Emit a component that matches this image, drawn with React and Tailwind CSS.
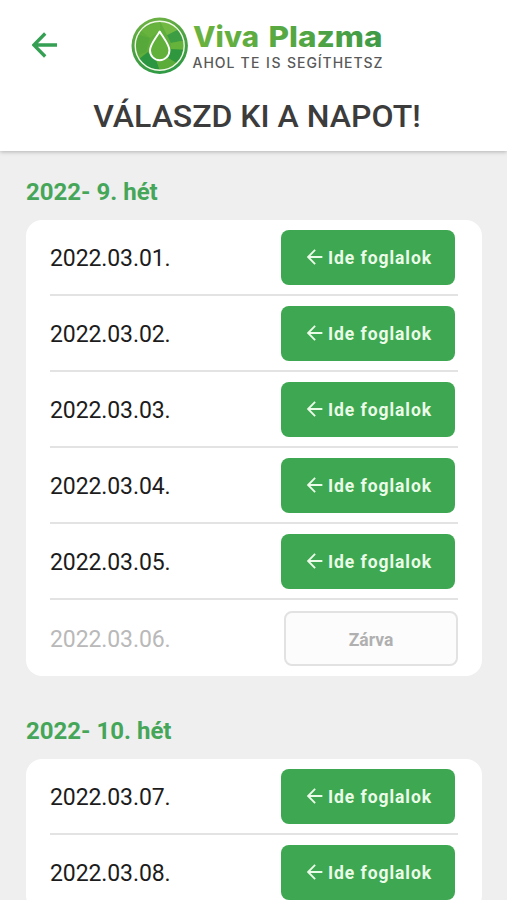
import { useState } from "react";

const WEEKS = [
  {
    title: "2022- 9. hét",
    days: [
      { date: "2022.03.01.", open: true },
      { date: "2022.03.02.", open: true },
      { date: "2022.03.03.", open: true },
      { date: "2022.03.04.", open: true },
      { date: "2022.03.05.", open: true },
      { date: "2022.03.06.", open: false },
    ],
  },
  {
    title: "2022- 10. hét",
    days: [
      { date: "2022.03.07.", open: true },
      { date: "2022.03.08.", open: true },
    ],
  },
];

function ArrowLeft({ className, strokeWidth }) {
  return (
    <svg viewBox="0 0 26 26" fill="none" stroke="currentColor" strokeWidth={strokeWidth} className={className}>
      <path d="M25 13H2.5M13.2 1.5 1.8 13l11.4 11.5" />
    </svg>
  );
}

function Logo() {
  return (
    <svg width="252" height="60" viewBox="0 0 252 60" className="font-['Inter',sans-serif]">
      <defs>
        <linearGradient id="brand" gradientUnits="userSpaceOnUse" x1="62" y1="0" x2="251" y2="0">
          <stop offset="0" stopColor="#6cb33f" />
          <stop offset="0.4" stopColor="#5aaa42" />
          <stop offset="1" stopColor="#3f9b48" />
        </linearGradient>
        <linearGradient id="ring" x1="0.3" y1="0" x2="0.6" y2="1">
          <stop offset="0" stopColor="#6fb244" />
          <stop offset="0.5" stopColor="#4aa043" />
          <stop offset="1" stopColor="#2f9a45" />
        </linearGradient>
        <clipPath id="disc">
          <circle cx="28.700" cy="29.700" r="24" />
        </clipPath>
      </defs>

      {/* Faceted disc */}
      <circle cx="28.700" cy="29.700" r="28.200" fill="url(#ring)" />
      <g clipPath="url(#disc)">
        <rect x="4" y="5" width="50" height="50" fill="#5fae3b" />
        <path d="M29 5 9 14l10 8 10-7z" fill="#68b23e" />
        <path d="M4 18l15 4-4 14-11 4z" fill="#57a83a" />
        <path d="m36 19 14-7 5 12-15 3z" fill="#3d9d42" />
        <path d="m29 5 7 14 14-7-8-7z" fill="#72b944" />
        <path d="m40 27 15-3v10l-15-1z" fill="#66b33c" />
        <path d="m40 33 15 1-8 14-10-6z" fill="#2f983f" />
        <path d="m8 43 9-7 9 10 3 9H16z" fill="#2c9540" />
        <path d="m26 46 11-4 10 6-18 7z" fill="#5cac3a" />
      </g>
      <circle cx="28.700" cy="29.700" r="24.500" fill="none" stroke="#f1f8e6" strokeWidth="1.400" />
      <path
        d="M28.700 15.500c-3.300 6-9.700 12.800-9.700 19a9.700 9.700 0 0 0 19.400 0c0-6.200-6.400-13-9.700-19z"
        fill="#61b03c"
        stroke="#fff"
        strokeWidth="1.900"
        strokeLinejoin="round"
      />

      <g fontSize="28.500" fontWeight="800" fill="url(#brand)">
        <text x="62" y="31" textLength="66" lengthAdjust="spacingAndGlyphs">Viva</text>
        <text x="137.500" y="31" textLength="114" lengthAdjust="spacingAndGlyphs">Plazma</text>
      </g>
      <g fontSize="14" fontWeight="500" fill="#595959">
        <text x="61.500" y="52" textLength="42" lengthAdjust="spacing">AHOL</text>
        <text x="109.500" y="52" textLength="19">TE</text>
        <text x="135" y="52" textLength="14.500">IS</text>
        <text x="156" y="52" textLength="95.500">SEGÍTHETSZ</text>
      </g>
    </svg>
  );
}

function DayRow({ day, selected, onSelect }) {
  if (!day.open) {
    return (
      <div className="flex h-[76px] items-center justify-between pt-px">
        <span className="pt-[3px] text-[23px] tracking-[-0.1px] text-[#b9b9b9]">{day.date}</span>
        <button
          disabled
          className="h-[55px] w-[174px] rounded-lg border-2 border-[#e2e2e2] bg-[#fcfcfc] pt-[3px] text-[17.5px] font-bold text-[#b0b0b0]"
        >
          Zárva
        </button>
      </div>
    );
  }

  return (
    <div className="flex h-[76px] items-center justify-between border-b-2 border-[#e3e3e3] pr-[3px]">
      <span className="pt-[5px] text-[23px] tracking-[-0.1px] text-[#1c1c1c]">{day.date}</span>
      <button
        onClick={() => onSelect(day.date)}
        aria-pressed={selected}
        className="flex h-[55px] w-[174px] items-center justify-center gap-[5px] rounded-lg bg-[#3ea751] pl-[3px] text-[17.5px] font-bold tracking-[0.95px] text-[#eafbe8]"
      >
        <ArrowLeft className="size-4" strokeWidth={3} />
        <span className="pt-[3px]">Ide foglalok</span>
      </button>
    </div>
  );
}

export default function App() {
  const [selected, setSelected] = useState(null);

  return (
    <div className="flex h-screen flex-col overflow-hidden bg-[#efefef] font-['Roboto',sans-serif]">
      <header className="relative h-[151px] shrink-0 bg-white shadow-[0_1px_4px_rgba(0,0,0,0.25)]">
        <div className="flex items-start pt-4 pl-8">
          <button aria-label="Vissza" className="mt-4 mr-[73px] text-[#35a053]">
            <ArrowLeft className="size-[26px]" strokeWidth={3.3} />
          </button>
          <Logo />
        </div>
        <h1 className="mt-5 pl-[7px] text-center text-[32px] leading-10 font-medium text-[#3c3c3c]">VÁLASZD KI A NAPOT!</h1>
      </header>

      <main className="flex-1 overflow-hidden px-[26px]">
        {WEEKS.map((week) => (
          <section key={week.title} className="pb-[14px]">
            <h2 className="flex h-[69px] items-end pb-3 text-[24px] leading-8 font-bold text-[#45a659]">{week.title}</h2>
            <div className="w-[456px] rounded-2xl bg-white px-6">
              {week.days.map((day) => (
                <DayRow key={day.date} day={day} selected={selected === day.date} onSelect={setSelected} />
              ))}
            </div>
          </section>
        ))}
      </main>
    </div>
  );
}
